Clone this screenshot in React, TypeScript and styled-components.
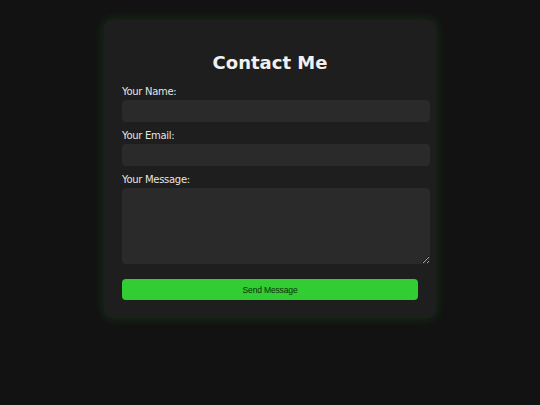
import React from 'react';
import styled, { createGlobalStyle } from 'styled-components';

const GlobalStyle = createGlobalStyle`
  html, body {
    margin: 0;
    padding: 0;
    background: #121212;
    font-family: "DejaVu Sans", Verdana, sans-serif;
    color: #e0e0e0;
  }
`;

const Page = styled.div`
  min-height: 405px;
  display: flex;
  justify-content: center;
  align-items: flex-start;
  padding-top: 20px;
  box-sizing: border-box;
`;

const Card = styled.form`
  width: 296px;
  padding: 18px;
  background: #1e1e1e;
  border-radius: 8px;
  box-shadow: 0 0 12px rgba(50, 205, 50, 0.18);
  display: flex;
  flex-direction: column;
`;

const Title = styled.h1`
  margin: 14px 0 11px;
  font-size: 18px;
  line-height: 22px;
  font-weight: bold;
  text-align: center;
  color: #f0f0f0;
`;

const Label = styled.label`
  font-size: 10px;
  line-height: 13px;
  letter-spacing: -0.3px;
  color: #e4e4e4;
  margin-bottom: 2px;
`;

const Field = styled.input`
  width: 308px;
  height: 22px;
  box-sizing: border-box;
  background: #2a2a2a;
  border: none;
  border-radius: 4px;
  color: #e0e0e0;
  margin: 0 0 7px;
  outline: none;
`;

const Area = styled.textarea`
  width: 308px;
  height: 76px;
  box-sizing: border-box;
  background: #2a2a2a;
  border: none;
  border-radius: 4px;
  color: #e0e0e0;
  margin: 0 0 15px;
  outline: none;
  resize: vertical;
`;

const SendButton = styled.button`
  width: 296px;
  height: 21px;
  padding: 0;
  background: #32cd32;
  border: none;
  border-radius: 4px;
  font-family: "Liberation Sans", Arial, sans-serif;
  font-size: 8.6px;
  letter-spacing: -0.2px;
  color: #0c300c;
  cursor: pointer;
`;

export default function App() {
  return (
    <>
      <GlobalStyle />
      <Page>
        <Card onSubmit={(e) => e.preventDefault()}>
          <Title>Contact Me</Title>
          <Label htmlFor="name">Your Name:</Label>
          <Field id="name" type="text" />
          <Label htmlFor="email">Your Email:</Label>
          <Field id="email" type="email" />
          <Label htmlFor="message">Your Message:</Label>
          <Area id="message" />
          <SendButton type="submit">Send Message</SendButton>
        </Card>
      </Page>
    </>
  );
}
